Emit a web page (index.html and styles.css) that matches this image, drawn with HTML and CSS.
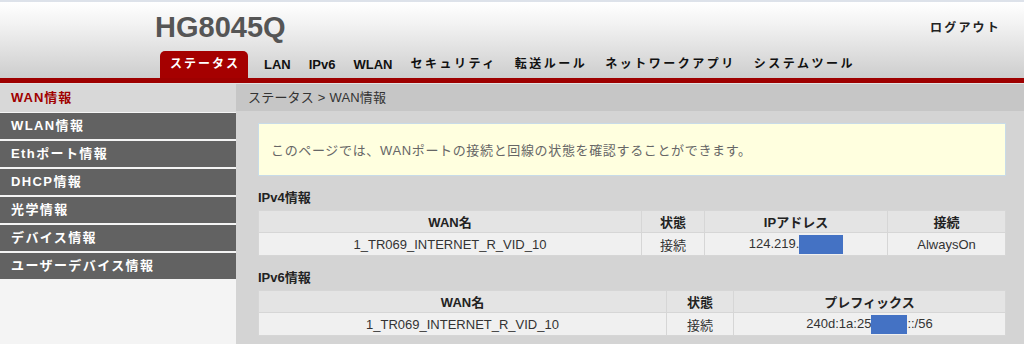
FILE: index.html
```html
<!DOCTYPE html>
<html lang="ja">
<head>
<meta charset="utf-8">
<title>HG8045Q</title>
<link rel="stylesheet" href="styles.css">
</head>
<body>
<header class="header">
  <div class="header-top">
    <div class="title">HG8045Q</div>
    <div class="logout">ログアウト</div>
  </div>
  <nav class="nav">
    <span class="nav-item active">ステータス</span>
    <span class="nav-item latin">LAN</span>
    <span class="nav-item latin">IPv6</span>
    <span class="nav-item latin">WLAN</span>
    <span class="nav-item">セキュリティ</span>
    <span class="nav-item">転送ルール</span>
    <span class="nav-item">ネットワークアプリ</span>
    <span class="nav-item">システムツール</span>
  </nav>
</header>
<div class="redbar"></div>
<div class="main">
  <aside class="sidebar">
    <div class="side-item current">WAN情報</div>
    <div class="side-item">WLAN情報</div>
    <div class="side-item">Ethポート情報</div>
    <div class="side-item">DHCP情報</div>
    <div class="side-item">光学情報</div>
    <div class="side-item">デバイス情報</div>
    <div class="side-item">ユーザーデバイス情報</div>
  </aside>
  <section class="content">
    <div class="breadcrumb">ステータス &gt; WAN情報</div>
    <div class="body">
      <div class="notice">このページでは、WANポートの接続と回線の状態を確認することができます。</div>
      <div class="label">IPv4情報</div>
      <table class="tbl tbl4">
        <colgroup><col class="c1"><col class="c2"><col class="c3"><col class="c4"></colgroup>
        <tr class="head"><th>WAN名</th><th>状態</th><th>IPアドレス</th><th>接続</th></tr>
        <tr class="row"><td>1_TR069_INTERNET_R_VID_10</td><td>接続</td><td>124.219.<span class="mask m4"></span></td><td>AlwaysOn</td></tr>
      </table>
      <div class="label">IPv6情報</div>
      <table class="tbl tbl6">
        <colgroup><col class="d1"><col class="d2"><col class="d3"></colgroup>
        <tr class="head"><th>WAN名</th><th>状態</th><th>プレフィックス</th></tr>
        <tr class="row"><td>1_TR069_INTERNET_R_VID_10</td><td>接続</td><td>240d:1a:25<span class="mask m6"></span>::/56</td></tr>
      </table>
    </div>
  </section>
</div>
</body>
</html>
```

FILE: styles.css
```css
html, body {
  margin: 0;
  padding: 0;
}
body {
  width: 1024px;
  height: 344px;
  overflow: hidden;
  font-family: "Liberation Sans", "Noto Sans CJK JP", sans-serif;
  font-size: 13px;
  color: #222;
  background: #f4f4f4;
}
.header {
  height: 76px;
  border-top: 2px solid #dde2ea;
  background: linear-gradient(#ffffff 0%, #f2f2f2 30%, #cdcdcd 100%);
  display: flex;
  flex-direction: column;
}
.header-top {
  height: 49px;
  display: flex;
  justify-content: space-between;
  align-items: flex-start;
}
.title {
  margin: 9px 0 0 155px;
  font-size: 29px;
  line-height: 33px;
  font-weight: bold;
  color: #555;
}
.logout {
  align-self: center;
  margin-right: 23px;
  font-size: 12px;
  font-weight: bold;
  letter-spacing: 2.2px;
  color: #222;
}
.nav {
  height: 27px;
  display: flex;
  align-items: flex-end;
  padding-left: 160px;
}
.nav-item {
  padding: 0 9px;
  line-height: 27px;
  font-size: 12px;
  font-weight: bold;
  letter-spacing: 2.5px;
  color: #111;
}
.nav-item.latin {
  font-size: 13px;
  letter-spacing: 0;
}
.nav-item.active {
  padding: 0 8px 0 10px;
  margin-right: 7px;
  letter-spacing: 2px;
  background: #a50000;
  color: #fff;
  border-radius: 5px 5px 0 0;
}
.redbar {
  height: 5px;
  background: #9e0000;
  border-bottom: 1px solid #e2e2e2;
}
.main {
  display: grid;
  grid-template-columns: 236px 1fr;
  height: 260px;
}
.sidebar {
  background: #f4f4f4;
}
.side-item {
  height: 26px;
  line-height: 26px;
  margin-top: 2px;
  padding-left: 11px;
  background: #626262;
  color: #fff;
  font-weight: bold;
  letter-spacing: 1.4px;
}
.side-item.current {
  height: 28px;
  line-height: 28px;
  margin-top: 0;
  margin-bottom: -1px;
  letter-spacing: 1px;
  background: #d8d8d8;
  color: #a00000;
}
.content {
  background: #d4d4d4;
}
.breadcrumb {
  height: 27px;
  line-height: 27px;
  padding-left: 12px;
  background: #c6c6c6;
  color: #333;
  letter-spacing: 0.2px;
}
.body {
  padding: 12px 18px 0 22px;
}
.notice {
  height: 51px;
  display: flex;
  align-items: center;
  padding-left: 12px;
  background: #ffffdf;
  border: 1px solid #c8dbe8;
  color: #666;
  letter-spacing: 0.65px;
}
.label {
  margin-top: 12px;
  margin-bottom: 2px;
  line-height: 20px;
  font-weight: bold;
  color: #222;
}
.tbl {
  width: 100%;
  border-collapse: collapse;
  table-layout: fixed;
}
.tbl th, .tbl td {
  border: 1px solid #d6d6d6;
  text-align: center;
  padding: 0;
  white-space: nowrap;
}
.tbl .head th {
  height: 21px;
  background: #e4e4e4;
  font-weight: bold;
  color: #222;
}
.tbl .row td {
  height: 22px;
  background: #f0f0f0;
  color: #333;
}
.c1 { width: 383px; }
.c2 { width: 63px; }
.c3 { width: 183px; }
.d1 { width: 408px; }
.d2 { width: 67px; }
.mask {
  display: inline-block;
  height: 19px;
  vertical-align: middle;
  background: #4472c4;
}
.m4 { width: 44px; }
.m6 { width: 36px; }
```
